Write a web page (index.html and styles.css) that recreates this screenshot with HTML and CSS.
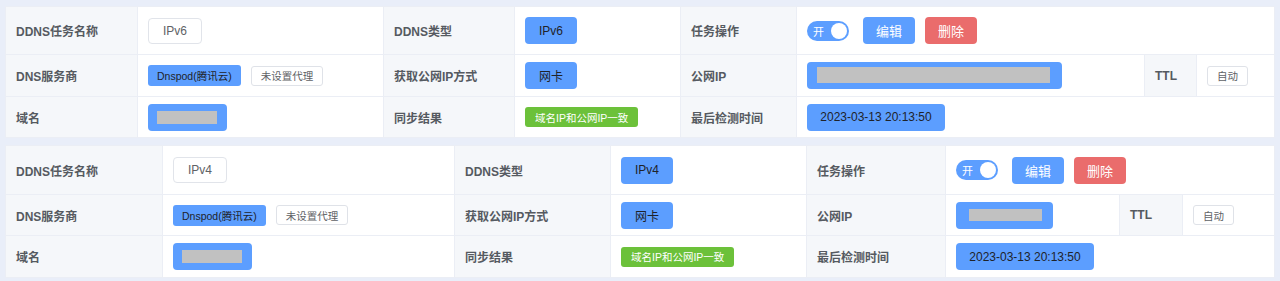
FILE: index.html
```html
<!DOCTYPE html>
<html lang="zh-CN">
<head>
<meta charset="utf-8">
<title>DDNS</title>
<link rel="stylesheet" href="styles.css">
</head>
<body>
<div class="page">
  <table class="task t1">
    <colgroup>
      <col class="c1"><col class="c2"><col class="c3"><col class="c4"><col class="c5"><col class="c6"><col class="c7"><col class="c8">
    </colgroup>
    <tr class="r1">
      <th>DDNS任务名称</th>
      <td><span class="tag tag-plain">IPv6</span></td>
      <th>DDNS类型</th>
      <td><span class="tag tag-blue">IPv6</span></td>
      <th>任务操作</th>
      <td colspan="3">
        <div class="ops">
          <span class="switch"><span class="switch-text">开</span><span class="knob"></span></span>
          <span class="btn btn-blue">编辑</span>
          <span class="btn btn-red">删除</span>
        </div>
      </td>
    </tr>
    <tr class="r2">
      <th>DNS服务商</th>
      <td><div class="tags"><span class="mini mini-blue">Dnspod(腾讯云)</span><span class="mini mini-plain">未设置代理</span></div></td>
      <th>获取公网IP方式</th>
      <td><span class="tag tag-blue">网卡</span></td>
      <th>公网IP</th>
      <td><span class="mask mask-ip6"><span class="mask-fill"></span></span></td>
      <th>TTL</th>
      <td><span class="mini mini-plain">自动</span></td>
    </tr>
    <tr class="r3">
      <th>域名</th>
      <td><span class="mask mask-domain"><span class="mask-fill"></span></span></td>
      <th>同步结果</th>
      <td><span class="mini mini-green">域名IP和公网IP一致</span></td>
      <th>最后检测时间</th>
      <td colspan="3"><span class="tag tag-blue tag-date">2023-03-13 20:13:50</span></td>
    </tr>
  </table>

  <table class="task t2">
    <colgroup>
      <col class="c1"><col class="c2"><col class="c3"><col class="c4"><col class="c5"><col class="c6"><col class="c7"><col class="c8">
    </colgroup>
    <tr class="r1">
      <th>DDNS任务名称</th>
      <td><span class="tag tag-plain">IPv4</span></td>
      <th>DDNS类型</th>
      <td><span class="tag tag-blue">IPv4</span></td>
      <th>任务操作</th>
      <td colspan="3">
        <div class="ops">
          <span class="switch"><span class="switch-text">开</span><span class="knob"></span></span>
          <span class="btn btn-blue">编辑</span>
          <span class="btn btn-red">删除</span>
        </div>
      </td>
    </tr>
    <tr class="r2">
      <th>DNS服务商</th>
      <td><div class="tags"><span class="mini mini-blue">Dnspod(腾讯云)</span><span class="mini mini-plain">未设置代理</span></div></td>
      <th>获取公网IP方式</th>
      <td><span class="tag tag-blue">网卡</span></td>
      <th>公网IP</th>
      <td><span class="mask mask-ip4"><span class="mask-fill"></span></span></td>
      <th>TTL</th>
      <td><span class="mini mini-plain">自动</span></td>
    </tr>
    <tr class="r3">
      <th>域名</th>
      <td><span class="mask mask-domain"><span class="mask-fill"></span></span></td>
      <th>同步结果</th>
      <td><span class="mini mini-green">域名IP和公网IP一致</span></td>
      <th>最后检测时间</th>
      <td colspan="3"><span class="tag tag-blue tag-date">2023-03-13 20:13:50</span></td>
    </tr>
  </table>
</div>
</body>
</html>
```

FILE: styles.css
```css
* { box-sizing: border-box; }

html, body {
  margin: 0;
  padding: 0;
  background: #e9eef9;
}

body {
  font-family: "Liberation Sans", "Noto Sans CJK SC", sans-serif;
  font-size: 12px;
  color: #606266;
}

.page {
  padding: 6px 6px 3px 5px;
  display: flex;
  flex-direction: column;
  gap: 7px;
}

.task {
  width: 1269px;
  table-layout: fixed;
  border-collapse: collapse;
  background: #fff;
  border: 1px solid #dfe4ee;
}

.task th,
.task td {
  border: 1px solid #ebeef5;
  padding: 0 10px;
  vertical-align: middle;
  text-align: left;
  white-space: nowrap;
}

.task th {
  background: #f5f7fa;
  font-weight: bold;
  font-size: 12px;
  color: #555a61;
}

.task .r1 th, .task .r1 td { height: 48px; }
.task .r2 th, .task .r2 td { height: 42px; }
.task .r3 th, .task .r3 td { height: 41px; }

.t2 .r1 th, .t2 .r1 td { height: 49px; }
.t2 .r2 th, .t2 .r2 td { height: 41px; }
.t2 .r3 th, .t2 .r3 td { height: 42px; }

/* column widths */
.t1 .c1 { width: 132px; }
.t1 .c2 { width: 246px; }
.t1 .c3 { width: 131px; }
.t1 .c4 { width: 166px; }
.t1 .c5 { width: 116px; }
.t1 .c6 { width: 348px; }
.t1 .c7 { width: 52px; }
.t1 .c8 { width: 78px; }

.t2 .c1 { width: 157px; }
.t2 .c2 { width: 292px; }
.t2 .c3 { width: 156px; }
.t2 .c4 { width: 196px; }
.t2 .c5 { width: 139px; }
.t2 .c6 { width: 174px; }
.t2 .c7 { width: 63px; }
.t2 .c8 { width: 92px; }

/* tags */
.tag {
  display: inline-flex;
  align-items: center;
  justify-content: center;
  height: 27px;
  padding: 0 14px;
  border-radius: 4px;
  font-size: 12px;
  vertical-align: middle;
}

.tag-plain {
  height: 26px;
  min-width: 50px;
  border: 1px solid #e1e4ea;
  color: #606266;
  background: #fff;
}

.tag-blue {
  min-width: 51px;
  background: #5c9eff;
  color: #1f2329;
}

.tag-date {
  width: 138px;
  padding: 0;
}

.tags {
  display: flex;
  gap: 10px;
  align-items: center;
}

.mini {
  display: inline-flex;
  align-items: center;
  justify-content: center;
  height: 21px;
  padding: 0 9px;
  border-radius: 3px;
  font-size: 10.5px;
  vertical-align: middle;
}

.mini-blue {
  background: #5c9eff;
  color: #1f2329;
}

.mini-plain {
  border: 1px solid #dfe2e8;
  background: #fff;
  color: #606266;
  height: 20px;
}

.mini-green {
  background: #6cc13a;
  color: #fff;
  height: 20px;
  padding: 0 10px;
}

/* masked values */
.mask {
  display: inline-flex;
  align-items: center;
  height: 27px;
  border-radius: 4px;
  background: #5c9eff;
  vertical-align: middle;
}

.mask-fill {
  display: block;
  background: #c1c1c1;
}

.mask-ip6 { width: 255px; padding: 0 12px 0 10px; }
.mask-ip6 .mask-fill { width: 233px; height: 16px; margin-bottom: 2px; }

.mask-ip4 { width: 97px; padding: 0 11px 0 13px; }
.mask-ip4 .mask-fill { width: 73px; height: 12px; }

.mask-domain { width: 79px; padding: 0 10px 0 9px; }
.mask-domain .mask-fill { width: 60px; height: 13px; }

/* operations */
.ops {
  display: flex;
  align-items: center;
}

.switch {
  position: relative;
  display: inline-flex;
  align-items: center;
  width: 42px;
  height: 20px;
  border-radius: 10px;
  background: #5c9eff;
  margin-right: 14px;
}

.switch-text {
  color: #fff;
  font-size: 11px;
  padding-left: 6px;
}

.knob {
  position: absolute;
  right: 2px;
  top: 2px;
  width: 16px;
  height: 16px;
  border-radius: 50%;
  background: #fff;
}

.btn {
  display: inline-flex;
  align-items: center;
  justify-content: center;
  width: 52px;
  height: 27px;
  border-radius: 4px;
  color: #fff;
  font-size: 13px;
  margin-right: 10px;
}

.btn-blue { background: #5c9eff; }
.btn-red { background: #ea6c6c; }
```
